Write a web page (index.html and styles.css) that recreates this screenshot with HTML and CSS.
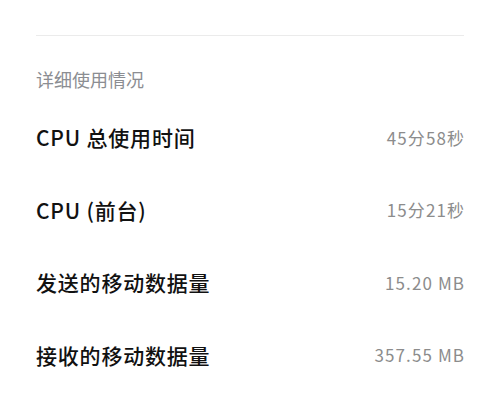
FILE: index.html
```html
<!DOCTYPE html>
<html lang="zh-CN">
<head>
<meta charset="utf-8">
<link rel="stylesheet" href="styles.css">
</head>
<body>
<div class="page">
  <div class="divider"></div>
  <div class="section-title">详细使用情况</div>
  <div class="list">
    <div class="row"><span class="label">CPU 总使用时间</span><span class="value">45分58秒</span></div>
    <div class="row"><span class="label">CPU (前台)</span><span class="value">15分21秒</span></div>
    <div class="row"><span class="label">发送的移动数据量</span><span class="value">15.20 MB</span></div>
    <div class="row"><span class="label">接收的移动数据量</span><span class="value">357.55 MB</span></div>
  </div>
</div>
</body>
</html>
```

FILE: styles.css
```css
html, body {
  margin: 0;
  padding: 0;
  background: #ffffff;
}
body {
  font-family: "Noto Sans CJK SC", "Noto Sans", sans-serif;
  width: 500px;
  height: 400px;
  overflow: hidden;
}
.page {
  padding: 35px 36px 0 36px;
}
.divider {
  height: 1px;
  background: #ebebeb;
}
.section-title {
  margin-top: 31px;
  height: 24px;
  line-height: 24px;
  font-size: 18px;
  color: #8b8d92;
}
.list {
  margin-top: 10px;
  display: flex;
  flex-direction: column;
}
.row {
  height: 72.5px;
  display: flex;
  align-items: center;
  justify-content: space-between;
}
.label {
  font-size: 21px;
  font-weight: 500;
  letter-spacing: 0.8px;
  color: #111111;
}
.value {
  font-size: 17px;
  letter-spacing: 1.1px;
  margin-right: -1.1px;
  color: #8c8c8c;
}
```
